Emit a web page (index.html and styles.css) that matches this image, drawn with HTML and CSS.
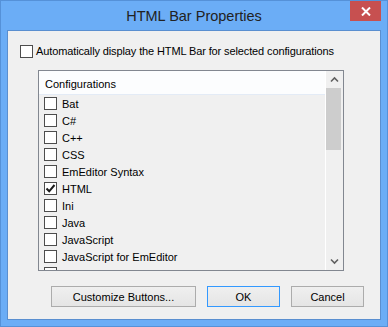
FILE: index.html
```html
<!DOCTYPE html>
<html lang="en">
<head>
  <meta charset="UTF-8">
  <title>HTML Bar Properties</title>
  <link rel="stylesheet" href="styles.css">
</head>
<body>
  <div class="window">
    <div class="titlebar">
      <span class="title">HTML Bar Properties</span>
      <button class="close" type="button" aria-label="Close">
        <svg width="10" height="9" viewBox="0 0 10 9">
          <path d="M1 0.5 L9 8.5 M9 0.5 L1 8.5" stroke="#fff" stroke-width="2" fill="none"/>
        </svg>
      </button>
    </div>

    <div class="client">
      <label class="auto-row">
        <span class="box"></span>
        <span>Automatically display the HTML Bar for selected configurations</span>
      </label>

      <div class="listbox">
        <div class="list-main">
          <div class="list-header">Configurations</div>
          <ul class="items">
            <li><span class="box"></span><span class="name">Bat</span></li>
            <li><span class="box"></span><span class="name">C#</span></li>
            <li><span class="box"></span><span class="name">C++</span></li>
            <li><span class="box"></span><span class="name">CSS</span></li>
            <li><span class="box"></span><span class="name">EmEditor Syntax</span></li>
            <li>
              <span class="box">
                <svg width="11" height="11" viewBox="0 0 11 11">
                  <path d="M1.5 5.5 L4.2 8.3 L9.5 2" stroke="#1a1a1a" stroke-width="2" fill="none"/>
                </svg>
              </span>
              <span class="name">HTML</span>
            </li>
            <li><span class="box"></span><span class="name">Ini</span></li>
            <li><span class="box"></span><span class="name">Java</span></li>
            <li><span class="box"></span><span class="name">JavaScript</span></li>
            <li><span class="box"></span><span class="name">JavaScript for EmEditor</span></li>
            <!-- next row is scrolled mostly out of view, only the box edge shows -->
            <li><span class="box"></span></li>
          </ul>
        </div>
        <div class="scrollbar">
          <div class="arrow">
            <svg width="9" height="7" viewBox="0 0 9 7">
              <path d="M1 5.5 L4.5 2 L8 5.5" stroke="#606060" stroke-width="1.6" fill="none"/>
            </svg>
          </div>
          <div class="thumb"></div>
          <div class="track"></div>
          <div class="arrow">
            <svg width="9" height="7" viewBox="0 0 9 7">
              <path d="M1 1.5 L4.5 5 L8 1.5" stroke="#606060" stroke-width="1.6" fill="none"/>
            </svg>
          </div>
        </div>
      </div>

      <div class="buttons">
        <button type="button" class="btn wide">Customize Buttons...</button>
        <button type="button" class="btn default">OK</button>
        <button type="button" class="btn">Cancel</button>
      </div>
    </div>
  </div>
</body>
</html>
```

FILE: styles.css
```css
body {
  margin: 0;
  font-family: "Liberation Sans", Arial, sans-serif;
  font-size: 11px;
  color: #000;
}
.window {
  width: 388px;
  height: 327px;
  box-sizing: border-box;
  background: #6badf6;
  border: 1px solid #5591d8;
  padding: 0 6px 6px 6px;
  display: flex;
  flex-direction: column;
}
.titlebar {
  height: 29px;
  margin: 0 -6px;
  display: grid;
  grid-template-columns: 1fr auto 1fr;
  align-items: start;
}
.title {
  grid-column: 2;
  margin-top: 5px;
  font-size: 14.5px;
  line-height: 20px;
  color: #222;
}
.close {
  grid-column: 3;
  justify-self: end;
  margin-right: 6px;
  width: 31px;
  height: 20px;
  padding: 0;
  border: none;
  background: #c75050;
  display: flex;
  align-items: center;
  justify-content: center;
}
.client {
  flex: 1;
  background: #f0f0f0;
  border: 1px solid #5a8fd0;
  padding: 14px 0 0 12px;
}
.box {
  width: 13px;
  height: 13px;
  box-sizing: border-box;
  border: 1px solid #4d4d4d;
  background: #fff;
  display: flex;
  align-items: center;
  justify-content: center;
  flex: none;
}
.auto-row {
  display: flex;
  align-items: center;
  gap: 3px;
  height: 13px;
  line-height: 13px;
  letter-spacing: -0.12px;
}
.listbox {
  margin: 12px 0 0 18px;
  width: 306px;
  height: 201px;
  box-sizing: border-box;
  border: 1px solid #828790;
  display: flex;
  overflow: hidden;
}
.list-main {
  width: 287px;
  box-sizing: border-box;
  border-right: 1px solid #fff;
  overflow: hidden;
}
.list-header {
  height: 24px;
  box-sizing: border-box;
  padding: 5px 6px 0;
  line-height: 17px;
  background: #fcfdfe;
  border-bottom: 1px solid #e3ebf6;
}
.items {
  list-style: none;
  margin: 0;
  padding: 0;
}
.items li {
  display: flex;
  align-items: flex-start;
  gap: 5px;
  height: 17px;
  padding-left: 5px;
}
.items .box {
  margin-top: 2px;
}
.items .name {
  line-height: 17px;
  padding-top: 1px;
}
.scrollbar {
  width: 17px;
  display: flex;
  flex-direction: column;
  background: #f0f0f0;
}
.arrow {
  height: 17px;
  display: flex;
  align-items: center;
  justify-content: center;
  flex: none;
}
.thumb {
  height: 62px;
  width: 15px;
  background: #cdcdcd;
  flex: none;
}
.track {
  flex: 1;
}
.buttons {
  display: flex;
  gap: 11px;
  margin: 15px 0 0 31px;
}
.btn {
  height: 21px;
  width: 73px;
  padding: 0;
  font-family: inherit;
  font-size: 11px;
  color: #000;
  background: linear-gradient(#efefef, #e5e5e5);
  border: 1px solid #acacac;
}
.btn.wide {
  width: 145px;
}
.btn.default {
  border-color: #3399ff;
}
```
